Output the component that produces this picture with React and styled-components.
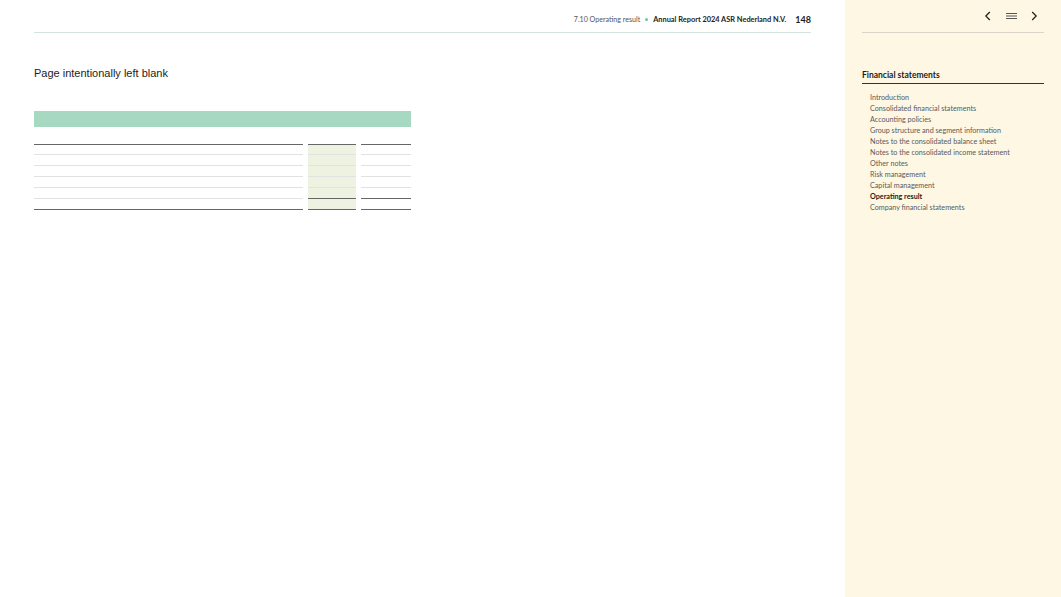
import React from 'react';
import styled, { createGlobalStyle } from 'styled-components';

const GlobalStyle = createGlobalStyle`
  html, body { margin: 0; padding: 0; background: #fff; }
  body { font-family: Lato, "Noto Sans", sans-serif; color: #1d1d1b; }
`;

const chapters = [
  'Introduction',
  'Consolidated financial statements',
  'Accounting policies',
  'Group structure and segment information',
  'Notes to the consolidated balance sheet',
  'Notes to the consolidated income statement',
  'Other notes',
  'Risk management',
  'Capital management',
  'Operating result',
  'Company financial statements',
];

// top border weight per row: thick rule opens the table, rule before totals
const rows = ['thick', 'thin', 'thin', 'thin', 'thin', 'total'];

export default function App() {
  return (
    <Page>
      <GlobalStyle />
      <Main>
        <Header>
          <Crumb>7.10 Operating result</Crumb>
          <Dot />
          <ReportName>Annual Report 2024 ASR Nederland N.V.</ReportName>
          <PageNo>148</PageNo>
        </Header>
        <Title>Page intentionally left blank</Title>
        <Table>
          <Banner />
          <Spacer />
          {rows.map((kind, i) => (
            <React.Fragment key={i}>
              <Cell $top={kind === 'thick' ? 'thick' : 'thin'} $last={i === rows.length - 1} />
              <Cell $top={kind === 'thin' ? 'thin' : 'thick'} $last={i === rows.length - 1} $shade />
              <Cell $top={kind === 'thin' ? 'thin' : 'thick'} $last={i === rows.length - 1} />
            </React.Fragment>
          ))}
        </Table>
      </Main>
      <Side>
        <Nav>
          <NavButton aria-label="previous">
            <svg width="10" height="12" viewBox="0 0 10 12">
              <path d="M6.8 2 2.8 6 6.8 10" fill="none" stroke="#1d1d1b" strokeWidth="1.2" />
            </svg>
          </NavButton>
          <NavButton aria-label="menu">
            <svg width="11" height="8" viewBox="0 0 11 8">
              <path d="M0 1.5h11M0 4h11M0 6.5h11" stroke="#555" strokeWidth="1.1" />
            </svg>
          </NavButton>
          <NavButton aria-label="next">
            <svg width="10" height="12" viewBox="0 0 10 12">
              <path d="M3.2 2 7.2 6 3.2 10" fill="none" stroke="#1d1d1b" strokeWidth="1.2" />
            </svg>
          </NavButton>
        </Nav>
        <SectionHead>Financial statements</SectionHead>
        <Chapters>
          {chapters.map((c) => (
            <Chapter key={c} $active={c === 'Operating result'}>{c}</Chapter>
          ))}
        </Chapters>
      </Side>
    </Page>
  );
}

const Page = styled.div`
  display: flex;
  width: 1061px;
  height: 597px;
  overflow: hidden;
`;

const Main = styled.div`
  flex: 0 0 845px;
  box-sizing: border-box;
  padding: 0 34px;
`;

const Header = styled.div`
  display: flex;
  justify-content: flex-end;
  align-items: center;
  height: 33px;
  padding-top: 6px;
  box-sizing: border-box;
  border-bottom: 1px solid #d3e4dc;
`;

const Crumb = styled.span`
  color: #555;
  font-size: 7.1px;
`;

const Dot = styled.span`
  width: 3px;
  height: 3px;
  border-radius: 50%;
  background: #6cc4a1;
  margin: 1px 5px 0;
`;

const ReportName = styled.span`
  font-weight: 700;
  font-size: 7.4px;
`;

const PageNo = styled.span`
  font-weight: 700;
  font-size: 9px;
  margin-left: 9px;
`;

const Title = styled.h1`
  margin: 33px 0 0;
  font-family: "Liberation Sans", Arial, sans-serif;
  font-weight: 400;
  font-size: 11px;
  line-height: 14px;
`;

const Table = styled.div`
  display: grid;
  grid-template-columns: 269px 48px 50px;
  column-gap: 5px;
  width: 377px;
  margin-top: 31px;
`;

const Banner = styled.div`
  grid-column: 1 / -1;
  height: 16px;
  background: #a6d8c2;
`;

const Spacer = styled.div`
  grid-column: 1 / -1;
  height: 16.5px;
`;

const Cell = styled.div`
  height: ${(p) => (p.$top === 'thick' ? '9.5px' : '10px')};
  border-top: ${(p) => (p.$top === 'thick' ? '1.5px solid #666' : '1px solid #e2e2e2')};
  border-bottom: ${(p) => (p.$last ? '1.5px solid #666' : 'none')};
  background: ${(p) => (p.$shade ? '#eef3e1' : 'transparent')};
`;

const Side = styled.aside`
  flex: 1;
  background: #fef7e3;
  padding: 0 17px;
`;

const Nav = styled.div`
  display: flex;
  justify-content: flex-end;
  align-items: center;
  gap: 11px;
  height: 33px;
  padding-right: 4px;
  padding-bottom: 1px;
  box-sizing: border-box;
  border-bottom: 1px solid #d9d5c8;
`;

const NavButton = styled.span`
  display: flex;
  align-items: center;
  justify-content: center;
  width: 12px;
  height: 12px;
`;

const SectionHead = styled.h2`
  margin: 37px 0 0;
  padding-bottom: 2px;
  font-size: 8.5px;
  font-weight: 700;
  line-height: 11px;
  border-bottom: 1.5px solid #333;
`;

const Chapters = styled.ul`
  list-style: none;
  margin: 8px 0 0;
  padding: 0 0 0 8px;
`;

const Chapter = styled.li`
  font-size: 7.2px;
  line-height: 11px;
  color: ${(p) => (p.$active ? '#1d1d1b' : '#5a5a5a')};
  font-weight: ${(p) => (p.$active ? 700 : 400)};
`;
